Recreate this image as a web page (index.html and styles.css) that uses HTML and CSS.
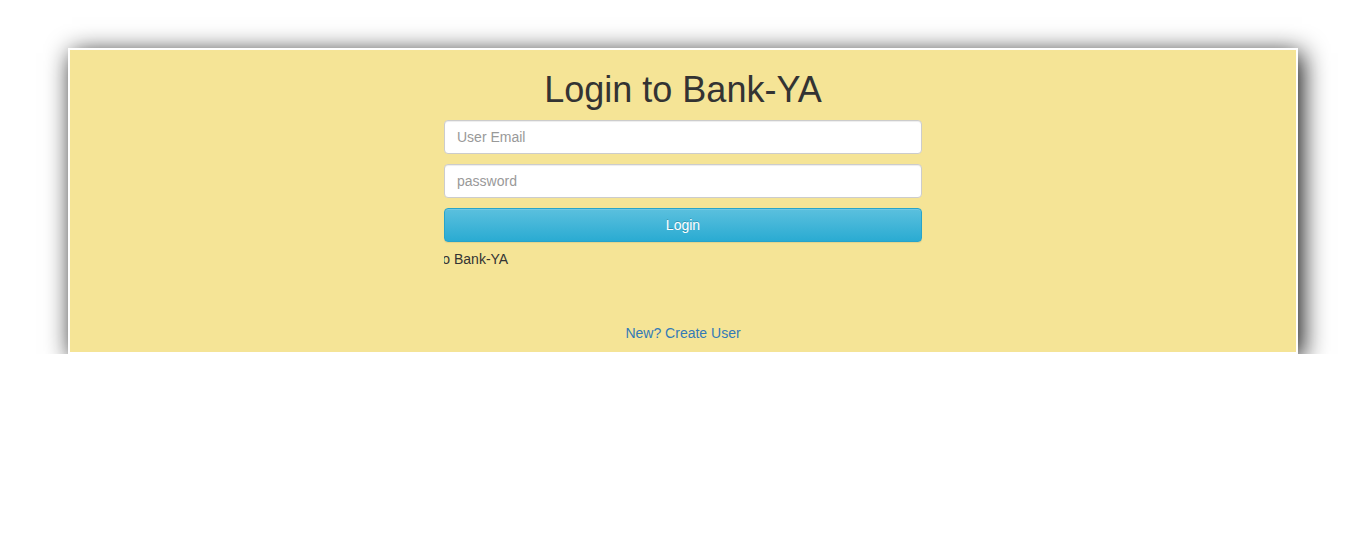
FILE: index.html
```html
<!DOCTYPE html>
<html>
<head>
<meta charset="utf-8">
<title>Login to Bank-YA</title>
<link rel="stylesheet" href="styles.css">
</head>
<body>
<div class="card">
  <h1 class="title">Login to Bank-YA</h1>
  <form class="login-form">
    <input class="field" type="email" placeholder="User Email">
    <input class="field" type="password" placeholder="password">
    <button class="btn-login" type="button">Login</button>
    <div class="ticker"><span class="ticker-text">to Bank-YA</span></div>
  </form>
  <div class="footer-link"><a href="#">New? Create User</a></div>
</div>
</body>
</html>
```
FILE: styles.css
```css
* { box-sizing: border-box; }
html, body {
  margin: 0;
  padding: 0;
  background: #fff;
  font-family: "Liberation Sans", Arial, sans-serif;
  font-size: 14px;
  line-height: 20px;
  color: #333;
}
.card {
  width: 1230px;
  margin: 48px auto 0;
  background: #f5e496;
  border: 2px solid #fff;
  box-shadow: 4px 5px 24px rgba(0, 0, 0, 0.95);
  padding-bottom: 9px;
}
.title {
  margin: 20px 0 10px;
  font-size: 36px;
  font-weight: 500;
  line-height: 1.1;
  text-align: center;
  color: #333;
}
.login-form {
  width: 478px;
  margin: 0 auto;
  display: flex;
  flex-direction: column;
}
.field {
  display: block;
  width: 100%;
  height: 34px;
  margin: 0 0 10px;
  padding: 6px 12px;
  font-family: inherit;
  font-size: 14px;
  color: #555;
  background: #fff;
  border: 1px solid #ccc;
  border-radius: 4px;
  box-shadow: inset 0 1px 1px rgba(0, 0, 0, 0.075);
  outline: none;
}
.field::placeholder { color: #999; }
.btn-login {
  display: block;
  width: 100%;
  height: 34px;
  padding: 6px 12px;
  font-family: inherit;
  font-size: 14px;
  color: #fff;
  background-image: linear-gradient(to bottom, #5bc0de 0, #2aabd2 100%);
  border: 1px solid #28a4c9;
  border-radius: 4px;
  box-shadow: inset 0 1px 0 rgba(255, 255, 255, 0.15), 0 1px 1px rgba(0, 0, 0, 0.075);
  text-shadow: 0 -1px 0 rgba(0, 0, 0, 0.2);
}
.ticker {
  margin-top: 7px;
  height: 20px;
  overflow: hidden;
  white-space: nowrap;
}
.ticker-text {
  display: inline-block;
  margin-left: -5.6px;
}
.footer-link {
  margin-top: 54px;
  text-align: center;
}
.footer-link a {
  color: #337ab7;
  text-decoration: none;
}
```
